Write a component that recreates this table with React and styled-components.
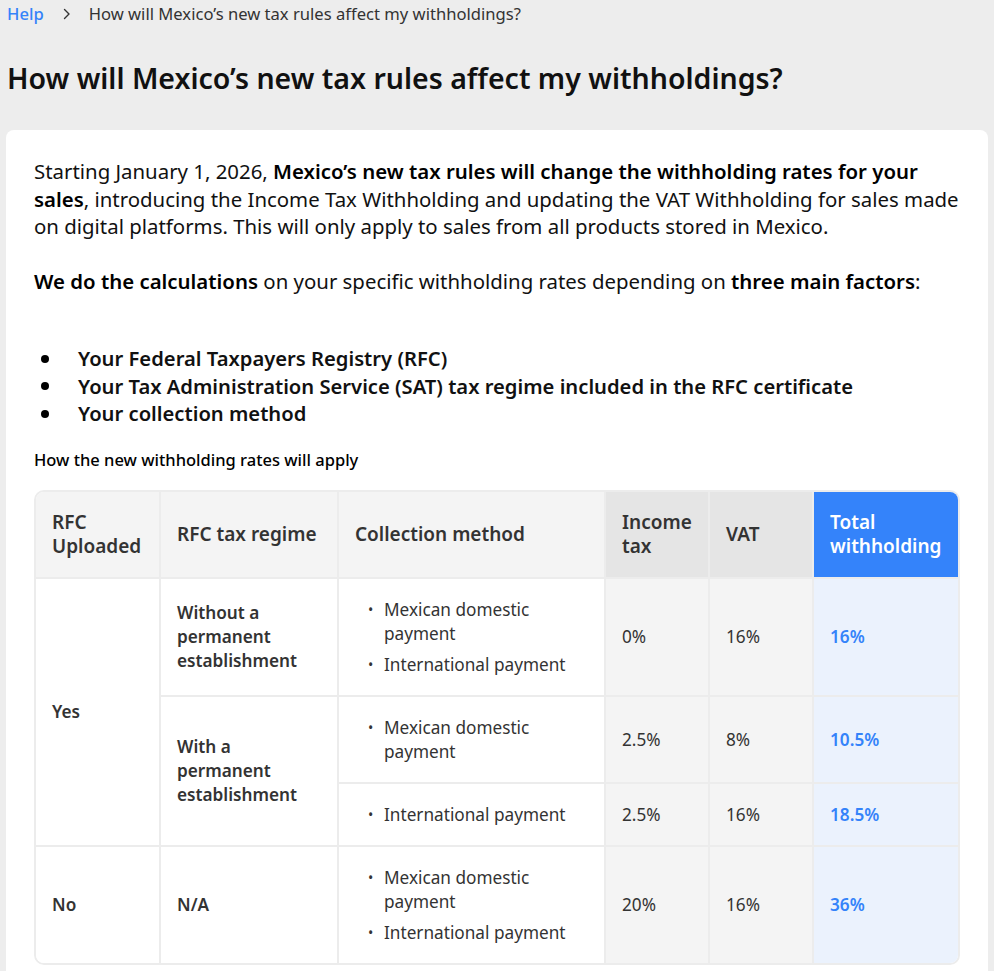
import React from "react";
import styled, { createGlobalStyle, css } from "styled-components";

const GlobalStyle = createGlobalStyle`
  html, body { margin: 0; padding: 0; }
  body {
    background: #ededed;
    font-family: "Noto Sans", "Inter", sans-serif;
    color: #000;
    -webkit-font-smoothing: antialiased;
  }
`;

const Page = styled.main`
  padding: 4px 6px 0 6px;
`;

const Breadcrumb = styled.nav`
  display: flex;
  align-items: center;
  height: 20px;
  padding-left: 1px;
  font-size: 16.6px;
  line-height: 20px;
  color: #333;
`;

const HelpLink = styled.a`
  color: #3483fa;
  text-decoration: none;
  font-weight: 500;
`;

const ChevronIcon = styled.svg`
  width: 8px;
  height: 12px;
  margin: 0 18px 0 19px;
  flex: none;
`;

const Crumb = styled.span`
  color: #333;
`;

const Title = styled.h1`
  margin: 36px 0 0 1px;
  font-size: 28.5px;
  line-height: 36px;
  font-weight: 600;
  color: #111;
`;

const Card = styled.section`
  margin-top: 34px;
  background: #fff;
  border-radius: 8px;
  padding: 28px;
`;

const Paragraph = styled.p`
  margin: 0 0 27px;
  font-size: 20.4px;
  line-height: 27.5px;
  color: #111;
`;

const Strong = styled.strong`
  font-weight: 600;
  color: #000;
`;

const FactorList = styled.ul`
  list-style: none;
  margin: 50px 0 0;
  padding: 0;
`;

const FactorItem = styled.li`
  display: flex;
  align-items: center;
  padding-left: 7px;
  font-size: 20.2px;
  line-height: 27.5px;
  font-weight: 600;
  color: #111;
`;

const Dot = styled.span`
  width: 8px;
  height: 8px;
  border-radius: 50%;
  background: #000;
  margin-right: 29px;
  flex: none;
`;

const Caption = styled.h3`
  margin: 22px 0 20px;
  font-size: 16.5px;
  line-height: 20px;
  font-weight: 500;
  color: #000;
`;

const TableWrap = styled.div`
  border: 2px solid #ececec;
  border-radius: 10px;
  overflow: hidden;
`;

const Table = styled.table`
  width: 100%;
  border-collapse: separate;
  border-spacing: 0;
  table-layout: fixed;
  font-size: 17.2px;
  line-height: 24px;
  color: #333;

  tr:last-child > td { border-bottom: 0; }
  th:last-child, td:last-child { border-right: 0; }
`;

const headTones = {
  light: css`background: #f4f4f4; color: #333;`,
  mid: css`background: #e5e5e5; color: #333;`,
  accent: css`background: #3483fa; color: #fff;`,
};

const bodyTones = {
  plain: css`background: #fff;`,
  mid: css`background: #f4f4f4;`,
  accent: css`background: #ebf2fd; color: #3483fa;`,
};

const HeadCell = styled.th`
  ${({ $tone }) => headTones[$tone || "light"]}
  text-align: left;
  vertical-align: middle;
  padding: 18px 6px 19px 16px;
  font-size: 19px;
  line-height: 24px;
  font-weight: 600;
  border-right: 2px solid #ececec;
  border-bottom: 2px solid #ececec;
`;

const BodyCell = styled.td`
  ${({ $tone }) => bodyTones[$tone || "plain"]}
  vertical-align: middle;
  padding: 19px 16px 18px 16px;
  font-weight: ${({ $strong }) => ($strong ? 600 : 400)};
  border-right: 2px solid #ececec;
  border-bottom: 2px solid #ececec;
`;

const MethodList = styled.ul`
  list-style: none;
  margin: 0;
  padding: 0;
`;

const MethodItem = styled.li`
  display: flex;
  & + & { margin-top: 7px; }
`;

const MethodBullet = styled.span`
  width: 29px;
  flex: none;
  padding-left: 13px;
  box-sizing: border-box;
  font-size: 14px;
`;

const Chevron = () => (
  <ChevronIcon viewBox="0 0 8 12" fill="none">
    <path d="M1.5 1.5 L6 6 L1.5 10.5" stroke="#333" strokeWidth="1.4" strokeLinecap="round" strokeLinejoin="round" />
  </ChevronIcon>
);

const Methods = ({ items }) => (
  <MethodList>
    {items.map((m) => (
      <MethodItem key={m}>
        <MethodBullet>•</MethodBullet>
        <span>{m}</span>
      </MethodItem>
    ))}
  </MethodList>
);

const DOM = "Mexican domestic payment";
const INTL = "International payment";

export default function App() {
  return (
    <>
      <GlobalStyle />
      <Page>
        <Breadcrumb>
          <HelpLink href="#">Help</HelpLink>
          <Chevron />
          <Crumb>How will Mexico’s new tax rules affect my withholdings?</Crumb>
        </Breadcrumb>
        <Title>How will Mexico’s new tax rules affect my withholdings?</Title>
        <Card>
          <Paragraph>
            Starting January 1, 2026, <Strong>Mexico’s new tax rules will change the withholding rates for your sales</Strong>, introducing the Income Tax Withholding and updating the VAT Withholding for sales made on digital platforms. This will only apply to sales from all products stored in Mexico.
          </Paragraph>
          <Paragraph>
            <Strong>We do the calculations</Strong> on your specific withholding rates depending on <Strong>three main factors</Strong>:
          </Paragraph>
          <FactorList>
            <FactorItem><Dot />Your Federal Taxpayers Registry (RFC)</FactorItem>
            <FactorItem><Dot />Your Tax Administration Service (SAT) tax regime included in the RFC certificate</FactorItem>
            <FactorItem><Dot />Your collection method</FactorItem>
          </FactorList>
          <Caption>How the new withholding rates will apply</Caption>
          <TableWrap>
            <Table>
              <colgroup>
                <col style={{ width: 125 }} />
                <col style={{ width: 178 }} />
                <col style={{ width: 267 }} />
                <col style={{ width: 104 }} />
                <col style={{ width: 104 }} />
                <col />
              </colgroup>
              <thead>
                <tr>
                  <HeadCell>RFC Uploaded</HeadCell>
                  <HeadCell>RFC tax regime</HeadCell>
                  <HeadCell>Collection method</HeadCell>
                  <HeadCell $tone="mid">Income tax</HeadCell>
                  <HeadCell $tone="mid">VAT</HeadCell>
                  <HeadCell $tone="accent">Total withholding</HeadCell>
                </tr>
              </thead>
              <tbody>
                <tr>
                  <BodyCell rowSpan={3} $strong>Yes</BodyCell>
                  <BodyCell $strong>Without a permanent establishment</BodyCell>
                  <BodyCell><Methods items={[DOM, INTL]} /></BodyCell>
                  <BodyCell $tone="mid">0%</BodyCell>
                  <BodyCell $tone="mid">16%</BodyCell>
                  <BodyCell $tone="accent" $strong>16%</BodyCell>
                </tr>
                <tr>
                  <BodyCell rowSpan={2} $strong>With a permanent establishment</BodyCell>
                  <BodyCell><Methods items={[DOM]} /></BodyCell>
                  <BodyCell $tone="mid">2.5%</BodyCell>
                  <BodyCell $tone="mid">8%</BodyCell>
                  <BodyCell $tone="accent" $strong>10.5%</BodyCell>
                </tr>
                <tr>
                  <BodyCell><Methods items={[INTL]} /></BodyCell>
                  <BodyCell $tone="mid">2.5%</BodyCell>
                  <BodyCell $tone="mid">16%</BodyCell>
                  <BodyCell $tone="accent" $strong>18.5%</BodyCell>
                </tr>
                <tr>
                  <BodyCell $strong>No</BodyCell>
                  <BodyCell $strong>N/A</BodyCell>
                  <BodyCell><Methods items={[DOM, INTL]} /></BodyCell>
                  <BodyCell $tone="mid">20%</BodyCell>
                  <BodyCell $tone="mid">16%</BodyCell>
                  <BodyCell $tone="accent" $strong>36%</BodyCell>
                </tr>
              </tbody>
            </Table>
          </TableWrap>
        </Card>
      </Page>
    </>
  );
}
